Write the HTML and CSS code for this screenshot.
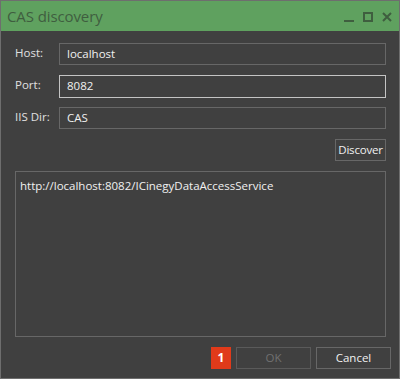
FILE: index.html
```html
<!DOCTYPE html>
<html>
<head>
<meta charset="utf-8">
<link rel="stylesheet" href="styles.css">
</head>
<body>
<div class="window">
  <div class="titlebar">
    <span class="title">CAS discovery</span>
    <div class="controls">
      <svg class="ctl" width="10" height="11" viewBox="0 0 10 11"><rect x="0" y="8" width="10" height="2" fill="#3f5e3f"/></svg>
      <svg class="ctl" width="10" height="11" viewBox="0 0 10 11"><rect x="1" y="1" width="8" height="8" fill="none" stroke="#3f5e3f" stroke-width="2"/></svg>
      <svg class="ctl" width="10" height="11" viewBox="0 0 10 11"><path d="M1 1 L9 9 M9 1 L1 9" stroke="#3f5e3f" stroke-width="2" fill="none"/></svg>
    </div>
  </div>
  <div class="content">
    <div class="row"><label class="lbl">Host:</label><div class="field">localhost</div></div>
    <div class="row"><label class="lbl">Port:</label><div class="field focused">8082</div></div>
    <div class="row"><label class="lbl">IIS Dir:</label><div class="field">CAS</div></div>
    <div class="discover-row"><div class="btn discover">Discover</div></div>
    <div class="output">http://localhost:8082/ICinegyDataAccessService</div>
    <div class="footer">
      <div class="badge">1</div>
      <div class="btn wide disabled">OK</div>
      <div class="btn wide">Cancel</div>
    </div>
  </div>
</div>
</body>
</html>
```

FILE: styles.css
```css
html, body {
  margin: 0;
  padding: 0;
  background: #404040;
}
.window {
  width: 400px;
  height: 379px;
  box-sizing: border-box;
  border: 1px solid #6e6e6e;
  background: #404040;
  display: flex;
  flex-direction: column;
  font-family: "Open Sans", "Noto Sans", sans-serif;
  color: #e8e8e8;
}
.titlebar {
  height: 30px;
  background: #5fa15f;
  display: flex;
  align-items: center;
  justify-content: space-between;
  padding-left: 6px;
  padding-right: 7px;
  flex: none;
}
.title {
  font-size: 15px;
  color: #3f5e3f;
  margin-top: -1px;
  letter-spacing: -0.1px;
}
.controls {
  display: flex;
  gap: 9px;
  align-items: center;
  margin-top: 2px;
}
.ctl {
  display: block;
}
.content {
  flex: 1;
  display: flex;
  flex-direction: column;
  padding: 12px 13px 9px 14px;
}
.row {
  display: flex;
  align-items: center;
  height: 22px;
  margin-bottom: 10px;
}
.lbl {
  width: 44px;
  font-size: 11.5px;
  color: #e0e0e0;
  margin-top: -4px;
}
.field {
  flex: 1;
  height: 22px;
  box-sizing: border-box;
  border: 1px solid #676767;
  font-size: 11.5px;
  line-height: 20px;
  padding-left: 7px;
  color: #f0f0f0;
}
.field.focused {
  border-color: #c4c4c4;
  height: 23px;
}
.discover-row {
  display: flex;
  justify-content: flex-end;
  margin-bottom: 10px;
}
.btn {
  height: 22px;
  box-sizing: border-box;
  border: 1px solid #676767;
  font-size: 11.5px;
  line-height: 20px;
  text-align: center;
  color: #f0f0f0;
}
.discover {
  width: 51px;
  letter-spacing: -0.2px;
}
.output {
  flex: 1;
  border: 1px solid #676767;
  font-size: 11.5px;
  padding: 5px 0 0 4px;
  line-height: 17px;
  color: #f0f0f0;
}
.footer {
  display: flex;
  justify-content: flex-end;
  gap: 5px;
  margin-top: 10px;
  margin-right: -5px;
}
.badge {
  width: 20px;
  height: 22px;
  background: #e03a1a;
  color: #ffffff;
  font-size: 12px;
  font-weight: bold;
  line-height: 22px;
  text-align: center;
}
.wide {
  width: 75px;
}
.disabled {
  color: #707070;
  border-color: #5a5a5a;
}
```
